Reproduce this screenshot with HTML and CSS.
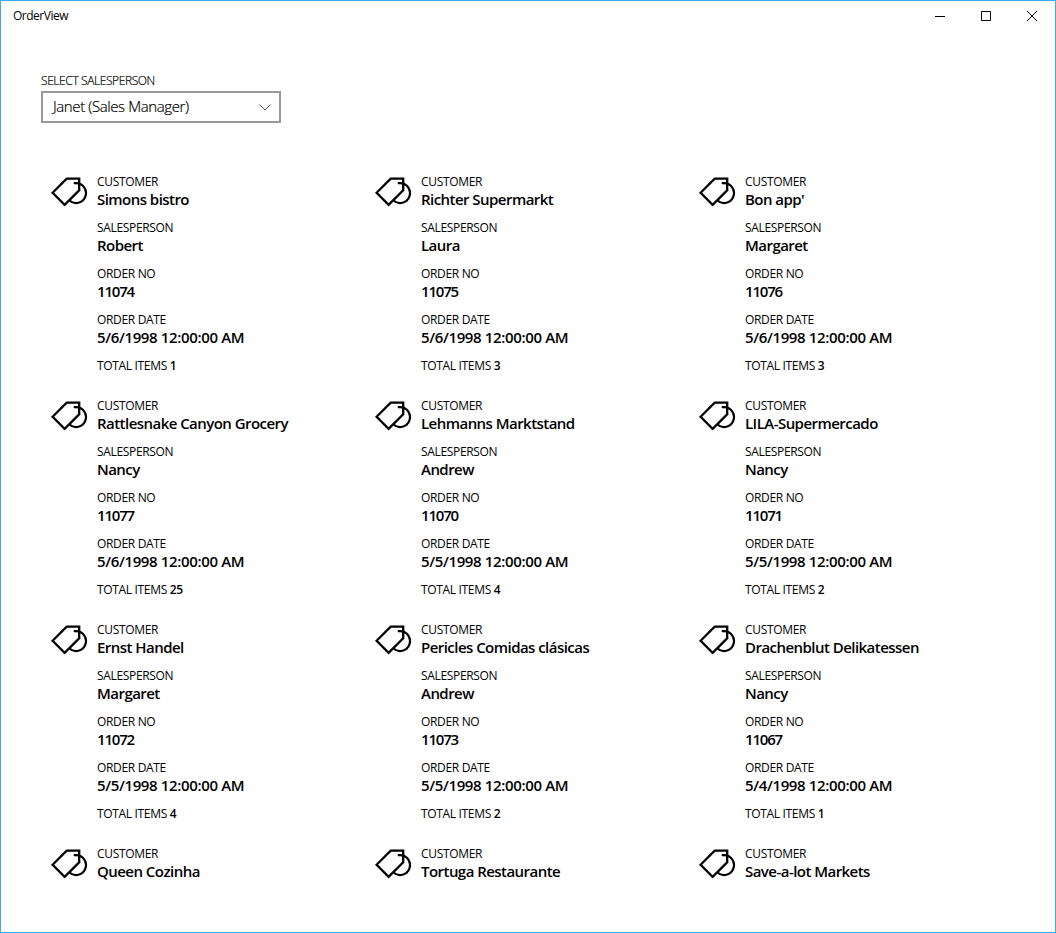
FILE: index.html
```html
<!DOCTYPE html>
<html lang="en">
<head>
<meta charset="utf-8">
<title>OrderView</title>
<link rel="stylesheet" href="styles.css">
</head>
<body>
<svg class="defs" aria-hidden="true">
  <symbol id="tag" viewBox="0 0 38 34">
    <path d="M2.6 17.800 16.700 3.700H29.200V15.200L14.600 29.800Z" fill="none" stroke="#000" stroke-width="2.300"/>
    <path d="M23.800 8.200H26A9.900 9.900 0 1 1 19.500 25.500" fill="none" stroke="#000" stroke-width="2.200"/>
  </symbol>
</svg>
<div class="window">
  <header class="titlebar">
    <span class="title">OrderView</span>
    <div class="controls">
      <svg class="control" viewBox="0 0 46 30"><path d="M18 15.500H28"/></svg>
      <svg class="control" viewBox="0 0 46 30"><path d="M18.500 10.500H27.500V19.500H18.500Z"/></svg>
      <svg class="control" viewBox="0 0 46 30"><path d="M18 10 28 20M28 10 18 20"/></svg>
    </div>
  </header>
  <main class="content">
    <div class="picker-label">SELECT SALESPERSON</div>
    <div class="picker"><span>Janet (Sales Manager)</span><svg class="chevron" viewBox="0 0 12 7"><path d="M.5 .5 6 6 11.500 .5"/></svg></div>
    <div class="orders">
      <article class="order"><svg class="icon"><use href="#tag"/></svg><div><div class="label">CUSTOMER</div><div class="value">Simons bistro</div><div class="label">SALESPERSON</div><div class="value">Robert</div><div class="label">ORDER NO</div><div class="value number">11074</div><div class="label">ORDER DATE</div><div class="value date">5/6/1998 12:00:00 AM</div><div class="label total">TOTAL ITEMS <b>1</b></div></div></article>
      <article class="order"><svg class="icon"><use href="#tag"/></svg><div><div class="label">CUSTOMER</div><div class="value">Richter Supermarkt</div><div class="label">SALESPERSON</div><div class="value">Laura</div><div class="label">ORDER NO</div><div class="value number">11075</div><div class="label">ORDER DATE</div><div class="value date">5/6/1998 12:00:00 AM</div><div class="label total">TOTAL ITEMS <b>3</b></div></div></article>
      <article class="order"><svg class="icon"><use href="#tag"/></svg><div><div class="label">CUSTOMER</div><div class="value">Bon app'</div><div class="label">SALESPERSON</div><div class="value">Margaret</div><div class="label">ORDER NO</div><div class="value number">11076</div><div class="label">ORDER DATE</div><div class="value date">5/6/1998 12:00:00 AM</div><div class="label total">TOTAL ITEMS <b>3</b></div></div></article>
      <article class="order"><svg class="icon"><use href="#tag"/></svg><div><div class="label">CUSTOMER</div><div class="value">Rattlesnake Canyon Grocery</div><div class="label">SALESPERSON</div><div class="value">Nancy</div><div class="label">ORDER NO</div><div class="value number">11077</div><div class="label">ORDER DATE</div><div class="value date">5/6/1998 12:00:00 AM</div><div class="label total">TOTAL ITEMS <b>25</b></div></div></article>
      <article class="order"><svg class="icon"><use href="#tag"/></svg><div><div class="label">CUSTOMER</div><div class="value">Lehmanns Marktstand</div><div class="label">SALESPERSON</div><div class="value">Andrew</div><div class="label">ORDER NO</div><div class="value number">11070</div><div class="label">ORDER DATE</div><div class="value date">5/5/1998 12:00:00 AM</div><div class="label total">TOTAL ITEMS <b>4</b></div></div></article>
      <article class="order"><svg class="icon"><use href="#tag"/></svg><div><div class="label">CUSTOMER</div><div class="value">LILA-Supermercado</div><div class="label">SALESPERSON</div><div class="value">Nancy</div><div class="label">ORDER NO</div><div class="value number">11071</div><div class="label">ORDER DATE</div><div class="value date">5/5/1998 12:00:00 AM</div><div class="label total">TOTAL ITEMS <b>2</b></div></div></article>
      <article class="order"><svg class="icon"><use href="#tag"/></svg><div><div class="label">CUSTOMER</div><div class="value">Ernst Handel</div><div class="label">SALESPERSON</div><div class="value">Margaret</div><div class="label">ORDER NO</div><div class="value number">11072</div><div class="label">ORDER DATE</div><div class="value date">5/5/1998 12:00:00 AM</div><div class="label total">TOTAL ITEMS <b>4</b></div></div></article>
      <article class="order"><svg class="icon"><use href="#tag"/></svg><div><div class="label">CUSTOMER</div><div class="value">Pericles Comidas clásicas</div><div class="label">SALESPERSON</div><div class="value">Andrew</div><div class="label">ORDER NO</div><div class="value number">11073</div><div class="label">ORDER DATE</div><div class="value date">5/5/1998 12:00:00 AM</div><div class="label total">TOTAL ITEMS <b>2</b></div></div></article>
      <article class="order"><svg class="icon"><use href="#tag"/></svg><div><div class="label">CUSTOMER</div><div class="value">Drachenblut Delikatessen</div><div class="label">SALESPERSON</div><div class="value">Nancy</div><div class="label">ORDER NO</div><div class="value number">11067</div><div class="label">ORDER DATE</div><div class="value date">5/4/1998 12:00:00 AM</div><div class="label total">TOTAL ITEMS <b>1</b></div></div></article>
      <article class="order"><svg class="icon"><use href="#tag"/></svg><div><div class="label">CUSTOMER</div><div class="value">Queen Cozinha</div></div></article>
      <article class="order"><svg class="icon"><use href="#tag"/></svg><div><div class="label">CUSTOMER</div><div class="value">Tortuga Restaurante</div></div></article>
      <article class="order"><svg class="icon"><use href="#tag"/></svg><div><div class="label">CUSTOMER</div><div class="value">Save-a-lot Markets</div></div></article>
    </div>
  </main>
</div>
</body>
</html>
```
FILE: styles.css
```css
* { box-sizing: border-box; }
body { margin: 0; background: #fff; color: #000; font-family: "Open Sans", "Noto Sans", sans-serif; }
.defs { display: none; }
.window { height: 933px; border: 1px solid #41a7e8; overflow: hidden; }
.titlebar { display: flex; justify-content: space-between; height: 30px; padding-left: 12px; }
.title { font-size: 12px; line-height: 30px; letter-spacing: -0.5px; }
.controls { display: flex; }
.control { width: 46px; height: 30px; fill: none; stroke: #000; stroke-width: 1; }
.content { padding: 42px 40px 0; }
.picker-label { font-size: 12px; line-height: 16px; font-weight: 300; letter-spacing: -0.4px; margin-bottom: 2px; -webkit-text-stroke: 0.2px #000; }
.picker { display: flex; align-items: center; justify-content: space-between; width: 240px; height: 32px; border: 2px solid #999; padding: 0 8px 0 10px; font-size: 15px; font-weight: 300; line-height: 20px; letter-spacing: -0.4px; -webkit-text-stroke: 0.2px #000; }
.picker span { padding-bottom: 2px; }
.chevron { width: 12px; height: 7px; fill: none; stroke: #555; stroke-width: 1; }
.orders { display: grid; grid-template-columns: repeat(3, 324px); grid-auto-rows: 224px; margin-top: 51px; }
.order { display: flex; padding-left: 9px; white-space: nowrap; }
.icon { flex: none; width: 38px; height: 34px; margin: 1px 9px 0 0; }
.label { font-size: 12px; line-height: 16px; letter-spacing: -0.33px; }
.value { font-size: 15px; line-height: 18px; font-weight: 600; margin-bottom: 12px; letter-spacing: -0.54px; }
.number { letter-spacing: -1.2px; }
.date { letter-spacing: -0.36px; }
.total b { font-weight: 600; }
```
